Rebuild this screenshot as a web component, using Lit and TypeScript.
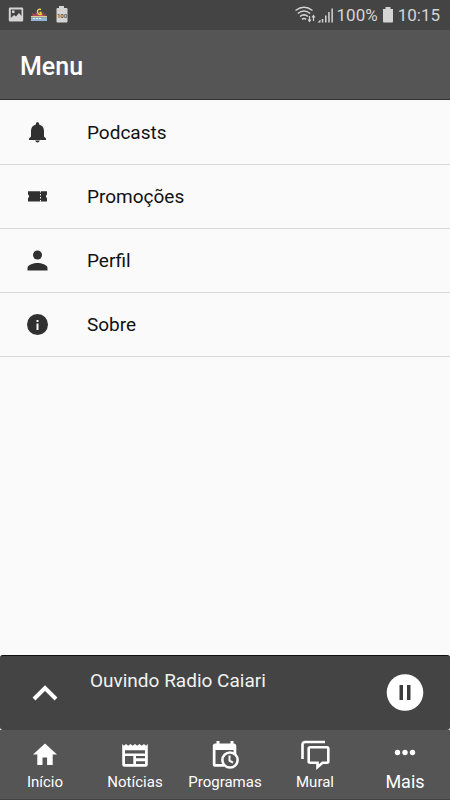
import { LitElement, html, svg, css } from "lit";
import { customElement } from "lit/decorators.js";

const icon = (size: string, box: string, content: unknown) =>
  html`<svg class="icon ${size}" viewBox=${box} aria-hidden="true">${content}</svg>`;

const menu = [
  {
    label: "Podcasts",
    art: svg`<path d="M10.200 19.600h4.600q-.5 2-2.300 2t-2.300-2zM12.500 1.300c1 0 1.600.7 1.600 1.500v.7c3.200.8 4.900 3.200 4.900 6.500v5.500l2 2v1.500H4v-1.500l2-2V10c0-3.300 1.700-5.700 4.900-6.500v-.7c0-.8.6-1.500 1.600-1.500z"/>`,
  },
  {
    label: "Promoções",
    art: svg`<path d="M3 6.200h19v3.300a2 2 0 0 0 0 3.600v3.400H3v-3.400a2 2 0 0 0 0-3.600z"/><path d="M15.500 6.200v1.300m0 1.500v1.500m0 1.500v1.500m0 1.500v1.500" stroke="#fafafa" stroke-width="1"/>`,
  },
  {
    label: "Perfil",
    art: svg`<circle cx="12.500" cy="6" r="4.500"/><path d="M2.500 21.500V19c0-3.300 6.500-5 10-5s10 1.700 10 5v2.500z"/>`,
  },
  {
    label: "Sobre",
    art: svg`<circle cx="12.500" cy="11.500" r="10.500"/><path d="M11.500 10.500h2V17h-2zM11.500 7h2v2h-2z" fill="#fafafa"/>`,
  },
];

const tabs = [
  { label: "Início", art: svg`<path d="M11.500 24v-7.500h4.600V24h5.600V13.500H26L14 2.500 2 13.500h4.300V24z"/>` },
  {
    label: "Notícias",
    art: svg`<path fill-rule="evenodd" d="M1.200 3l1.700 1.800L5 3l2.200 1.800L9.500 3l2.200 1.800L14 3l2.200 1.800L18.500 3l2.200 1.800L23 3l2 1.800L26.800 3v20.500a2.300 2.300 0 0 1-2.300 2.300h-21a2.300 2.300 0 0 1-2.300-2.300zM4 9.300v3.200h20V9.300zM4 15v8h8.300v-8zM15 15v2.300h9V15zM15 20.300V23h9v-2.700z"/>`,
  },
  {
    label: "Programas",
    art: svg`<path fill-rule="evenodd" d="M5.500 0h3v2.500h11V0h3v2.500h.5A2.500 2.500 0 0 1 25.300 5v8.500H22.500V9H4.500v14H13v2.800H4.500A2.700 2.700 0 0 1 1.800 23V5a2.500 2.500 0 0 1 2.500-2.500h1.200z"/><circle cx="19" cy="19" r="7.600" fill="#555" stroke="#fff" stroke-width="2.500"/><path d="M18.500 14.500v5.200l3.500 2" fill="none" stroke="#fff" stroke-width="2"/>`,
  },
  {
    label: "Mural",
    art: svg`<path d="M1.500 18V3.500A2.500 2.500 0 0 1 4 1h20M9 6.300h17q1.300 0 1.300 1.300v12.800q0 1.300-1.300 1.300h-4.500l-5 4.500v-4.500H9q-1.300 0-1.300-1.300V7.600q0-1.300 1.300-1.300z" fill="none" stroke="#fff" stroke-width="2.600"/>`,
  },
  {
    label: "Mais",
    large: true,
    art: svg`<circle cx="6.500" cy="11.500" r="2.700"/><circle cx="14" cy="11.500" r="2.700"/><circle cx="21.500" cy="11.500" r="2.700"/>`,
  },
];

@customElement("app-root")
export class AppRoot extends LitElement {
  static styles = css`
    :host {
      display: flex;
      flex-direction: column;
      min-height: 100vh;
      background: #fafafa;
      color: #111;
      font-family: Roboto, "Noto Sans", sans-serif;
    }
    * { box-sizing: border-box; }
    button, a { font: inherit; color: inherit; text-decoration: none; }
    button { border: 0; padding: 0; background: none; }
    .icon { display: block; flex: none; fill: currentColor; overflow: visible; }
    .status {
      display: flex;
      justify-content: space-between;
      align-items: center;
      height: 30px;
      padding: 0 10px 0 8px;
      background: #444;
      color: #d4d4d4;
      font-size: 17px;
      line-height: 30px;
    }
    .group { display: flex; align-items: center; }
    .notices { gap: 7px; }
    .signals { gap: 4px; }
    .tiny { width: 16px; height: 16px; }
    .wifi { width: 20px; height: 16px; }
    .cell { width: 12px; height: 16px; }
    .top {
      height: 70px;
      padding: 0 20px;
      background: #555;
      border-bottom: 1px solid #333;
      color: #fff;
    }
    .title { margin: 0; font-size: 25px; font-weight: 500; line-height: 74px; }
    .list { list-style: none; margin: 0; padding: 1px 0 0; flex: 1; }
    .row {
      display: flex;
      align-items: center;
      gap: 38px;
      height: 64px;
      padding: 0 25px;
      border-bottom: 1px solid #d8d8d8;
      font-size: 19px;
    }
    .medium { width: 24px; height: 24px; color: #303030; }
    .player {
      display: flex;
      align-items: center;
      height: 75px;
      padding: 0 26px 0 32px;
      gap: 32px;
      background: #444;
      border-top: 1px solid #111;
      border-radius: 3px;
      color: #f2f2f2;
      font-size: 19px;
    }
    .chevron { width: 26px; height: 16px; color: #fff; }
    .track { flex: 1; align-self: flex-start; margin: 0; line-height: 50px; }
    .round { width: 38px; height: 38px; color: #fff; }
    .tabs {
      display: grid;
      grid-template-columns: repeat(5, 1fr);
      height: 70px;
      background: #555;
      border-bottom: 1px solid #444;
      color: #fff;
    }
    .tab {
      display: flex;
      flex-direction: column;
      align-items: center;
      gap: 3px;
      padding-top: 11px;
      font-size: 15px;
      line-height: 20px;
    }
    .big { font-size: 18px; }
    .nav { width: 28px; height: 28px; }
  `;

  render() {
    return html`
      <div class="status">
        <div class="group notices">
          ${icon("tiny", "0 0 16 16", svg`<path fill-rule="evenodd" d="M2 .5h12a1.200 1.200 0 0 1 1.200 1.200v11.600A1.200 1.200 0 0 1 14 14.500H2a1.200 1.200 0 0 1-1.200-1.200V1.700A1.200 1.200 0 0 1 2 .5zm.8 2v8.500L6 8l2 1.500 3-3.500 2.500 3V2.500zM4 3.500h2.500V6H4z"/>`)}
          ${icon("tiny", "0 0 16 16", svg`<path d="M1 6l4 2-1-3 3 2h3l3-2-1 3 3-1-1 3H2z" fill="#b84a5a"/><path d="M0 9h16v1.500H0z" fill="#d8cf9a"/><path d="M0 10.500h16v3.500H0z" fill="#8fb4d8"/><path d="M2 11.500h9" stroke="#eee" stroke-dasharray="2 1"/><path d="M10 2.500q-3.500-1-3.500 2T10 7.500v-2H8.500" fill="none" stroke="#e8d84a" stroke-width="1.400"/>`)}
          ${icon("tiny", "0 0 16 16", svg`<path d="M5-1h5v2h2.500a1 1 0 0 1 1 1v12.500a1 1 0 0 1-1 1h-9a1 1 0 0 1-1-1V2a1 1 0 0 1 1-1H5z"/><text x="8" y="10.500" text-anchor="middle" font-size="6" font-weight="500" fill="#444">100</text>`)}
        </div>
        <div class="group signals">
          ${icon("wifi", "0 0 20 16", svg`<g fill="none" stroke="currentColor" stroke-width="1.500"><path d="M-1.500 3.500q8.500-6.500 17 0M.8 6.500q6.200-5 12.400 0M3 9.500q4-3.300 8 0M5 12.300q2-1.600 4 0"/><path d="M12.500 9v5M16.500 14V8.500" stroke-width="1.200"/></g><path d="M10.500 12.500h4L12.500 15.500zM14.500 10.500h4l-2-3z"/>`)}
          ${icon("cell", "0 0 12 16", svg`<path d="M-3.500 15.500l3-3v3zM.8 12h1.500v3.500H.8zM4 8.500h1.500v7H4zM7.200 5h1.500v10.500H7.200zM10.400 1.500h1.500v14h-1.500z"/>`)}
          <span>100%</span>
          ${icon("cell", "0 0 12 16", svg`<path d="M3.500 0h5v2H11v12.500a1 1 0 0 1-1 1H2a1 1 0 0 1-1-1V2h2.500z"/>`)}
          <span>10:15</span>
        </div>
      </div>
      <header class="top"><h1 class="title">Menu</h1></header>
      <ul class="list">
        ${menu.map(
          (m) => html`<li><a class="row" href="#">${icon("medium", "0 0 24 24", m.art)}<span>${m.label}</span></a></li>`
        )}
      </ul>
      <section class="player">
        <button aria-label="Expandir">
          ${icon("chevron", "0 0 26 16", svg`<path d="M2 14L13 3l11 11" fill="none" stroke="currentColor" stroke-width="4"/>`)}
        </button>
        <p class="track">Ouvindo Radio Caiari</p>
        <button aria-label="Pausar">
          ${icon("round", "0 0 38 38", svg`<circle cx="19" cy="18.500" r="18.300"/><path d="M13.500 11h3.500v15h-3.500zM21 11h3.500v15H21z" fill="#3c3c3c"/>`)}
        </button>
      </section>
      <nav class="tabs">
        ${tabs.map(
          (t) => html`<a class="tab ${t.large ? "big" : ""}" href="#">${icon("nav", "0 0 28 28", t.art)}<span>${t.label}</span></a>`
        )}
      </nav>
    `;
  }
}
